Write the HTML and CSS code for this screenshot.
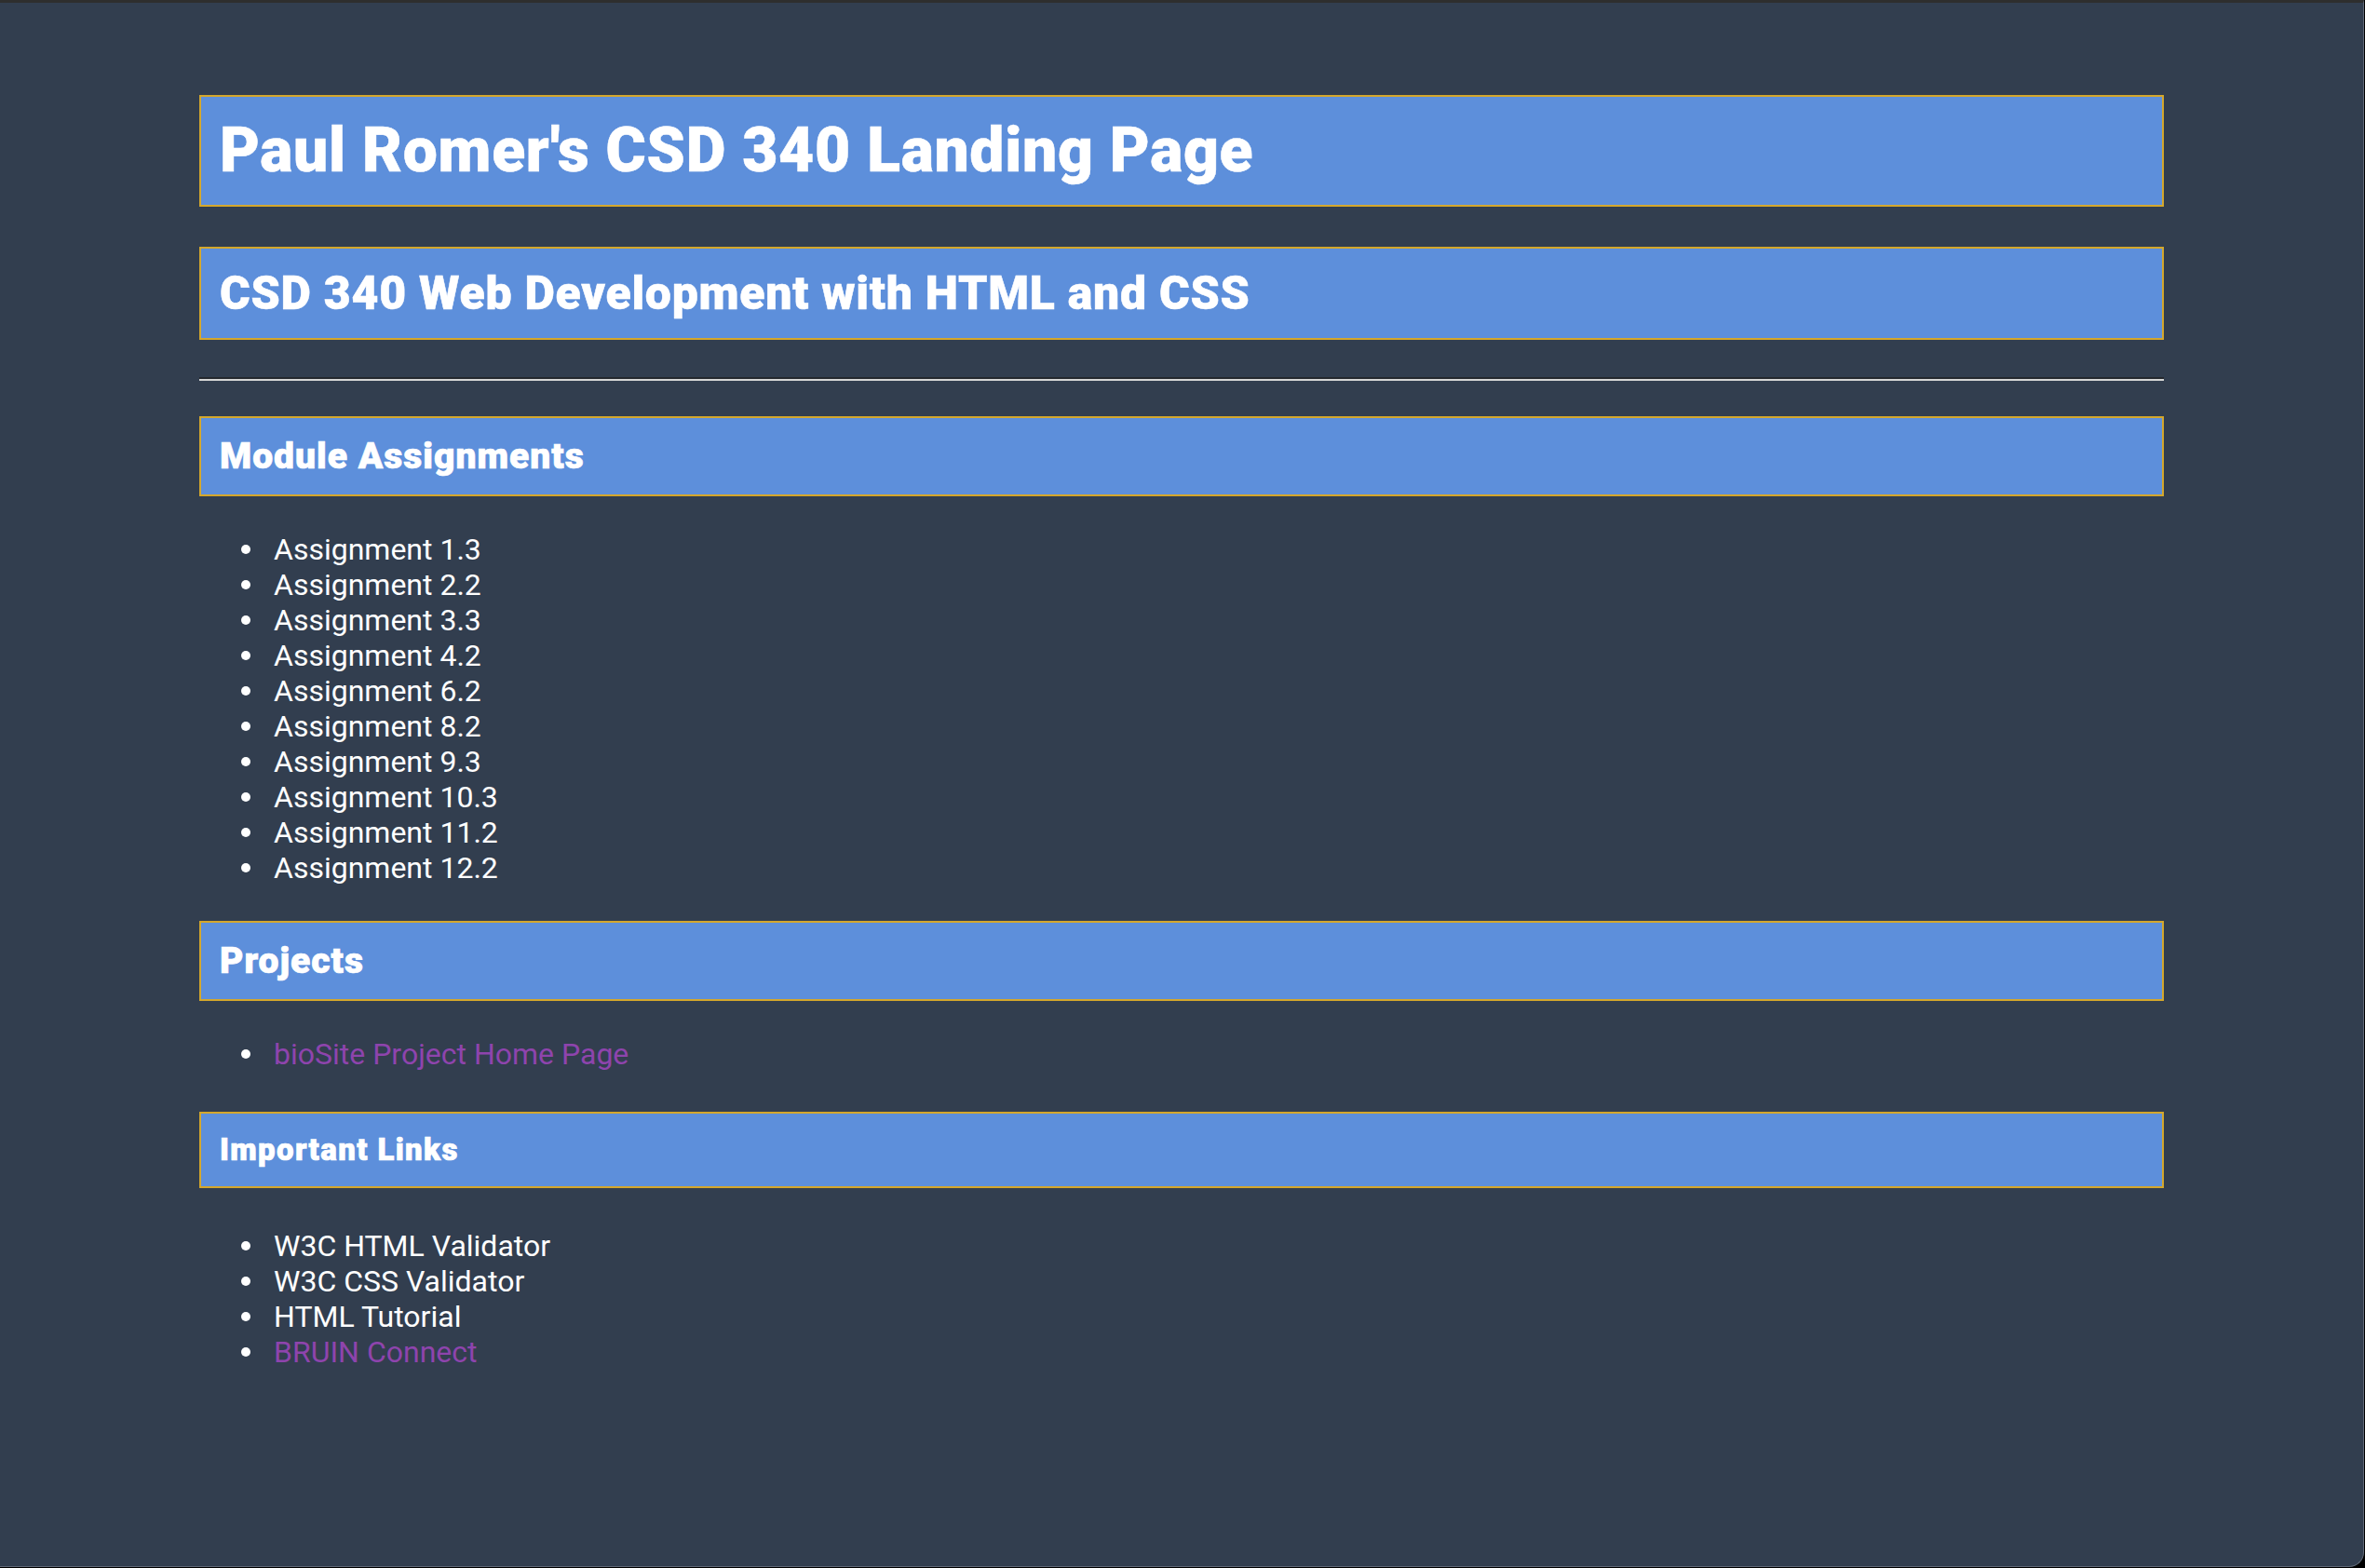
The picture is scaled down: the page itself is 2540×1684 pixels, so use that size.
FILE: index.html
```html
<!DOCTYPE html>
<html lang="en">
<head>
<meta charset="utf-8">
<title>Paul Romer's CSD 340 Landing Page</title>
<link rel="stylesheet" href="styles.css">
</head>
<body>
<div class="frame">
  <main class="page">
    <h1 class="box">Paul Romer's CSD 340 Landing Page</h1>
    <h2 class="box">CSD 340 Web Development with HTML and CSS</h2>
    <hr class="rule">
    <h3 class="box">Module Assignments</h3>
    <ul class="list">
      <li>Assignment 1.3</li>
      <li>Assignment 2.2</li>
      <li>Assignment 3.3</li>
      <li>Assignment 4.2</li>
      <li>Assignment 6.2</li>
      <li>Assignment 8.2</li>
      <li>Assignment 9.3</li>
      <li>Assignment 10.3</li>
      <li>Assignment 11.2</li>
      <li>Assignment 12.2</li>
    </ul>
    <h3 class="box">Projects</h3>
    <ul class="list">
      <li><a class="link" href="#">bioSite Project Home Page</a></li>
    </ul>
    <h4 class="box">Important Links</h4>
    <ul class="list">
      <li>W3C HTML Validator</li>
      <li>W3C CSS Validator</li>
      <li>HTML Tutorial</li>
      <li><a class="link" href="#">BRUIN Connect</a></li>
    </ul>
  </main>
</div>
</body>
</html>
```
FILE: styles.css
```css
html, body {
  margin: 0;
  padding: 0;
  background: #000;
}

.frame {
  box-sizing: border-box;
  width: 2539px;
  height: 1683px;
  background: #323e4f;
  border-top: 3px solid #2e2e2e;
  border-right: 1px solid #5f6876;
  border-bottom: 1px solid #5f6876;
  border-bottom-right-radius: 16px;
  overflow: hidden;
  font-family: Roboto, "Liberation Sans", sans-serif;
  color: #ffffff;
  font-size: 32px;
}

.page {
  width: 2110px;
  margin: 0 0 0 214px;
  padding-top: 56px;
  display: flow-root;
}

.box {
  background: #5d8fdb;
  border: 2px solid #d4a72c;
  padding: 19px 20px;
  font-weight: 900;
  color: #ffffff;
  -webkit-text-stroke: 0.5px #ffffff;
}

h1.box {
  font-size: 66px;
  line-height: 78px;
  letter-spacing: 0.7px;
  margin: 43px 0;
}

h2.box {
  font-size: 50px;
  line-height: 58px;
  letter-spacing: 0.72px;
  margin: 40px 0;
}

h3.box {
  font-size: 39px;
  line-height: 44px;
  letter-spacing: 1px;
  margin: 38px 0;
  -webkit-text-stroke: 0.7px #ffffff;
}

h4.box {
  font-size: 33px;
  line-height: 38px;
  letter-spacing: 1.35px;
  margin: 43px 0;
  padding-top: 20px;
  padding-bottom: 20px;
  -webkit-text-stroke: 0.7px #ffffff;
}

.rule {
  margin: 16px 0;
  height: 0;
  border: 0;
  border-top: 2px solid #24282e;
  border-bottom: 2px solid #d6d6d6;
}

.list {
  margin: 38px 0;
  padding-left: 80px;
  line-height: 38px;
  font-size: 32px;
  list-style: none;
}

.list li::before {
  content: "";
  display: inline-block;
  width: 10px;
  height: 10px;
  border-radius: 50%;
  background: #ffffff;
  margin-left: -35px;
  margin-right: 25px;
  vertical-align: 6px;
}

.link {
  color: #8e44ad;
  text-decoration: none;
}
```
